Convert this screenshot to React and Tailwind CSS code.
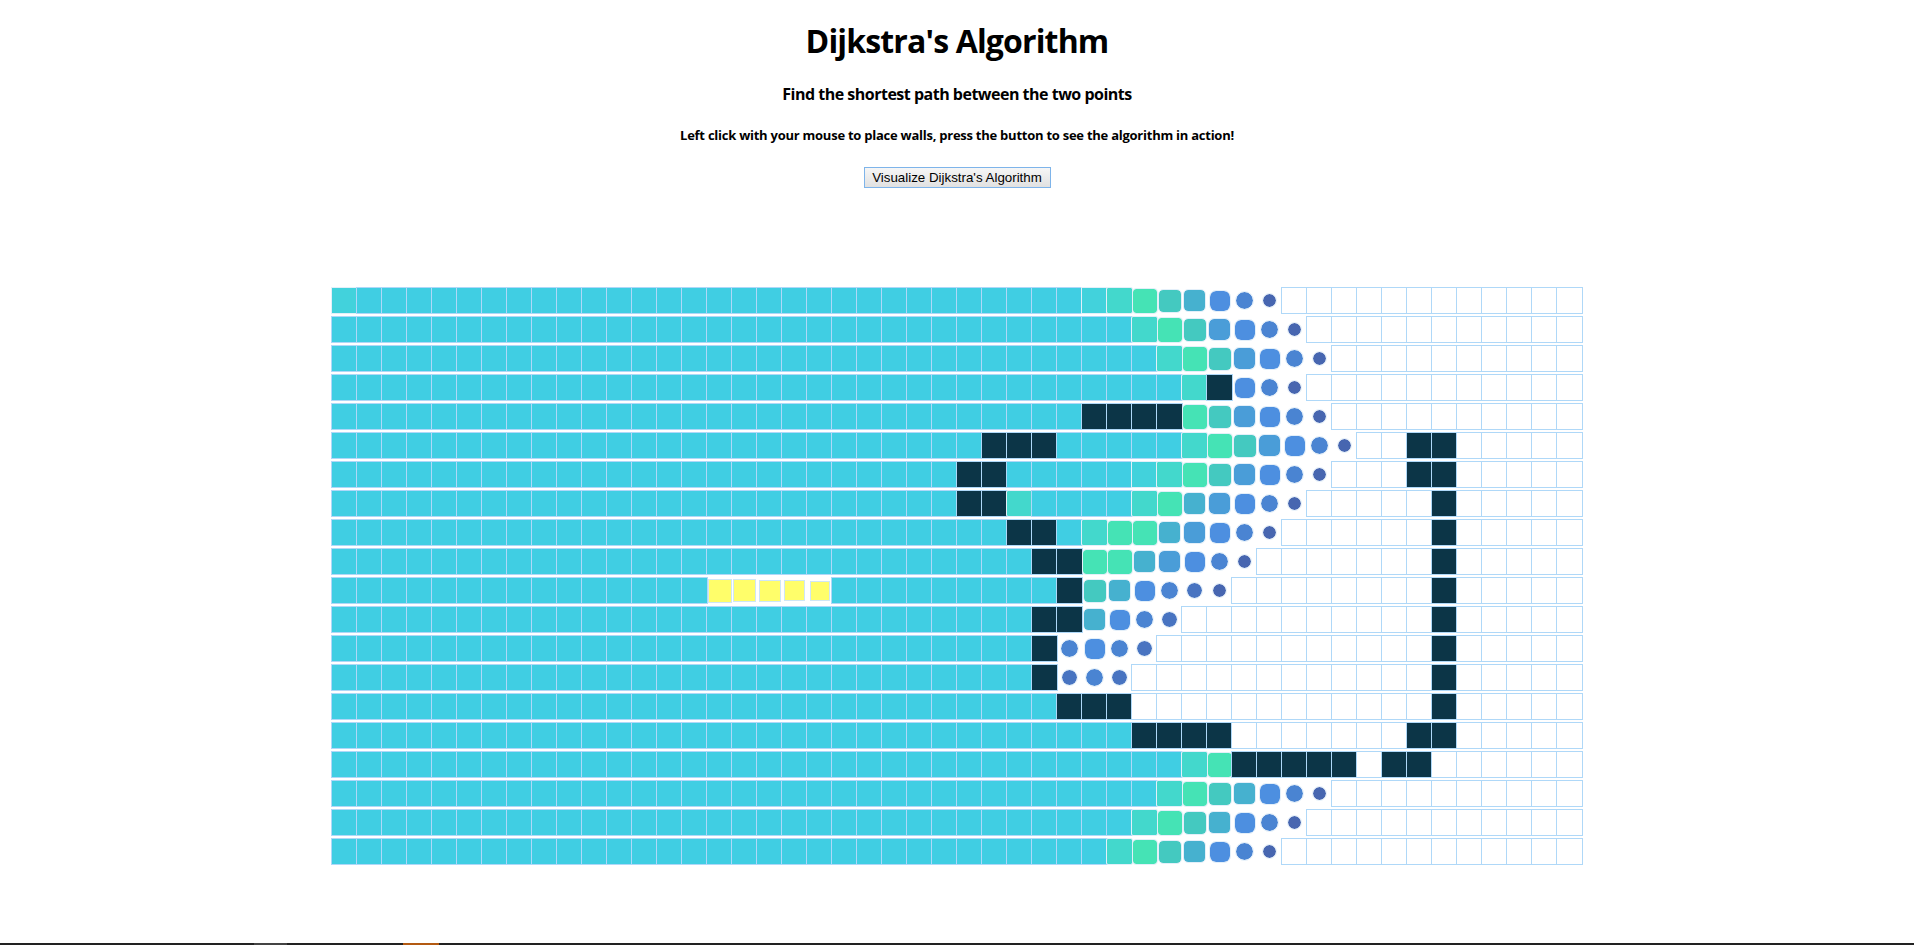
import React from 'react';

// grid snapshot: v visited, # wall, . empty, y path, 0-9 nodes mid-animation
const GRID = [
  '0' + 'v'.repeat(29) + '09876431' + '.'.repeat(12),
  'v'.repeat(32) + '9875431' + '.'.repeat(11),
  'v'.repeat(33) + '9875431' + '.'.repeat(10),
  'v'.repeat(34) + '9#431' + '.'.repeat(11),
  'v'.repeat(30) + '####' + '875431' + '.'.repeat(10),
  'v'.repeat(26) + '###' + 'vvvvv' + '9875431' + '..##' + '.'.repeat(5),
  'v'.repeat(25) + '##' + 'vvvvv0' + '9875431' + '...##' + '.'.repeat(5),
  'v'.repeat(25) + '##' + '9vvvv' + '9865431' + '.....#' + '.'.repeat(5),
  'v'.repeat(27) + '##' + 'v' + '98865431' + '......#' + '.'.repeat(5),
  'v'.repeat(28) + '##' + '8865431' + '.......#' + '.'.repeat(5),
  'v'.repeat(15) + 'yyyyy' + 'v'.repeat(9) + '#' + '764321' + '........#' + '.'.repeat(5),
  'v'.repeat(28) + '##' + '6432' + '..........#' + '.'.repeat(5),
  'v'.repeat(28) + '#' + '3432' + '...........#' + '.'.repeat(5),
  'v'.repeat(28) + '#' + '232' + '............#' + '.'.repeat(5),
  'v'.repeat(29) + '###' + '............#' + '.'.repeat(5),
  'v'.repeat(32) + '####' + '.......##' + '.'.repeat(5),
  'v'.repeat(34) + '98' + '#####.##' + '.'.repeat(6),
  'v'.repeat(33) + '9876431' + '.'.repeat(10),
  'v'.repeat(32) + '9876431' + '.'.repeat(11),
  'v'.repeat(31) + '9876431' + '.'.repeat(12),
];

const LEVELS = {
  '1': 'w-[13px] h-[13px] rounded-full bg-[#4766b0]',
  '2': 'w-[15px] h-[15px] rounded-full bg-[#4874c1]',
  '3': 'w-[17px] h-[17px] rounded-full bg-[#4a84d2]',
  '4': 'w-[20px] h-[20px] rounded-[6px] bg-[#4d8fe0]',
  '5': 'w-[21px] h-[21px] rounded-[5px] bg-[#4a9dd8]',
  '6': 'w-[21px] h-[21px] rounded-[4px] bg-[#46b1cf]',
  '7': 'w-[22px] h-[22px] rounded-[4px] bg-[#44c9c0]',
  '8': 'w-[24px] h-[24px] rounded-[3px] bg-[#45e3b5]',
  '9': 'w-[25px] h-[25px] rounded-[1px] bg-[#43d8cc]',
  '0': 'w-[25px] h-[25px] bg-[#42d2dc]',
};

const PATH_SIZES = [
  'w-[22px] h-[22px]',
  'w-[21px] h-[21px]',
  'w-[20px] h-[20px]',
  'w-[19px] h-[19px]',
  'w-[18px] h-[18px]',
];

function Node({ type, pathIndex }) {
  if (type === 'v') {
    return <div className="w-[25px] h-[25px] bg-[#40cee3] outline outline-[#afd8f8]" />;
  }
  if (type === '#') {
    return <div className="w-[25px] h-[25px] bg-[#0c3547] outline outline-[#afd8f8]" />;
  }
  if (type === '.') {
    return <div className="w-[25px] h-[25px] bg-white outline outline-[#afd8f8]" />;
  }
  if (type === 'y') {
    return (
      <div className="w-[25px] h-[25px] flex items-center justify-center">
        <div className={`${PATH_SIZES[pathIndex]} bg-[#fffe6a] outline outline-[#cfe6f6]`} />
      </div>
    );
  }
  return (
    <div className="w-[25px] h-[25px] flex items-center justify-center">
      <div className={`${LEVELS[type]} outline outline-[#e3eff9]`} />
    </div>
  );
}

export default function App() {
  return (
    <div className="min-h-[945px] flex flex-col items-center bg-white font-['Open_Sans',sans-serif] text-black">
      <h1 className="mt-[21px] text-[32px] leading-[40px] font-bold tracking-[-0.85px]">Dijkstra's Algorithm</h1>
      <h4 className="mt-[23px] text-[16px] leading-[20px] font-bold tracking-[-0.5px]">Find the shortest path between the two points</h4>
      <h5 className="mt-[22px] text-[13px] leading-[18px] font-bold tracking-[-0.25px]">
        Left click with your mouse to place walls, press the button to see the algorithm in action!
      </h5>
      <button className="mt-[23px] w-[187px] h-[21px] border border-[#7eb4ea] bg-linear-to-b from-[#f6f6f6] to-[#e1e1e1] font-['Liberation_Sans',Arial,sans-serif] text-[13.33px] leading-[19px] text-black">
        Visualize Dijkstra's Algorithm
      </button>

      <div className="mt-[100px] flex flex-col gap-[4px]">
        {GRID.map((row, r) => (
          <div key={r} className="flex">
            {row.split('').map((cell, c) => (
              <Node key={c} type={cell} pathIndex={c - 15} />
            ))}
          </div>
        ))}
      </div>

      <div className="mt-auto w-full h-[2px] bg-[#222222] flex">
        <div className="ml-[254px] w-[33px] bg-[#444444]" />
        <div className="ml-[116px] w-[36px] bg-[#b35a12]" />
      </div>
    </div>
  );
}
